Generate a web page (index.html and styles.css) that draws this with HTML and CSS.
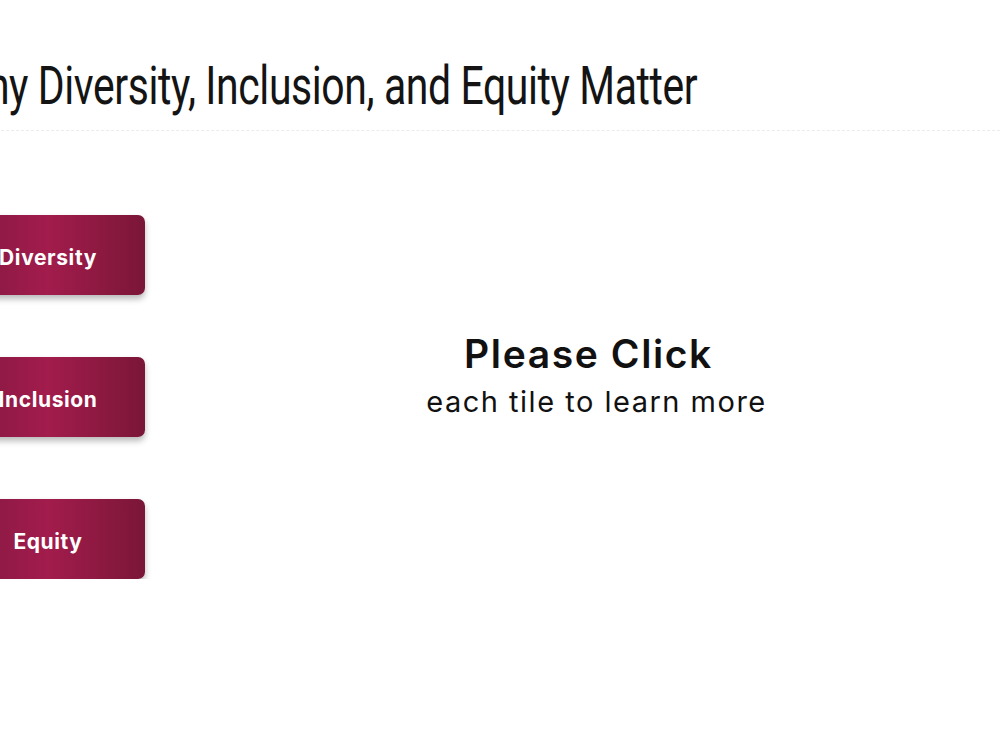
FILE: index.html
```html
<!DOCTYPE html>
<html lang="en">
<head>
<meta charset="utf-8">
<title>Why Diversity, Inclusion, and Equity Matter</title>
<link rel="stylesheet" href="styles.css">
</head>
<body>
<main class="page">
  <header class="page-head">
    <h1 class="title">Why Diversity, Inclusion, and Equity Matter</h1>
  </header>
  <section class="explorer">
    <nav class="tiles">
      <button class="tile" type="button">Diversity</button>
      <button class="tile" type="button">Inclusion</button>
      <button class="tile" type="button">Equity</button>
    </nav>
    <div class="prompt">
      <p class="prompt-main">Please Click</p>
      <p class="prompt-sub">each tile to learn more</p>
    </div>
  </section>
</main>
</body>
</html>
```

FILE: styles.css
```css
html, body {
  margin: 0;
  padding: 0;
  background: #ffffff;
  overflow: hidden;
}

.page {
  width: 1049px;
  margin-left: -49px;
  color: #111111;
}

.page-head {
  padding-top: 56px;
  padding-bottom: 14px;
  border-bottom: 1px dashed #ececec;
}

/* condensed display heading */
.title {
  margin: 0;
  padding-left: 0;
  font-family: Roboto, "DejaVu Sans", sans-serif;
  font-weight: 400;
  font-size: 53px;
  line-height: 60px;
  letter-spacing: -0.5px;
  color: #141414;
  white-space: nowrap;
  transform: scaleX(0.772);
  transform-origin: left center;
}

.explorer {
  display: flex;
  align-items: flex-start;
  padding-top: 84px;
}

.tiles {
  display: flex;
  flex-direction: column;
  gap: 62px;
  width: 194px;
  flex: none;
}

.tile {
  display: block;
  width: 194px;
  height: 80px;
  border: 0;
  border-radius: 7px;
  background: linear-gradient(to right, #7f173f 0%, #a21c4c 50%, #7a1637 100%);
  box-shadow: 0 4px 6px rgba(0, 0, 0, 0.28);
  color: #ffffff;
  font-family: Inter, "Noto Sans", sans-serif;
  font-weight: 700;
  font-size: 21px;
  letter-spacing: 0.6px;
  text-align: center;
  padding: 4px 0 0;
  cursor: pointer;
}

.prompt {
  flex: 1;
  text-align: center;
  padding-top: 116px;
  padding-left: 48px;
  font-family: Inter, "Noto Sans", sans-serif;
  color: #111111;
}

.prompt-main {
  margin: 0;
  padding-right: 16px;
  font-size: 39px;
  font-weight: 600;
  letter-spacing: 1.6px;
  line-height: 46px;
}

.prompt-sub {
  margin: 0;
  font-size: 29px;
  font-weight: 400;
  letter-spacing: 1.5px;
  line-height: 49px;
}
```
